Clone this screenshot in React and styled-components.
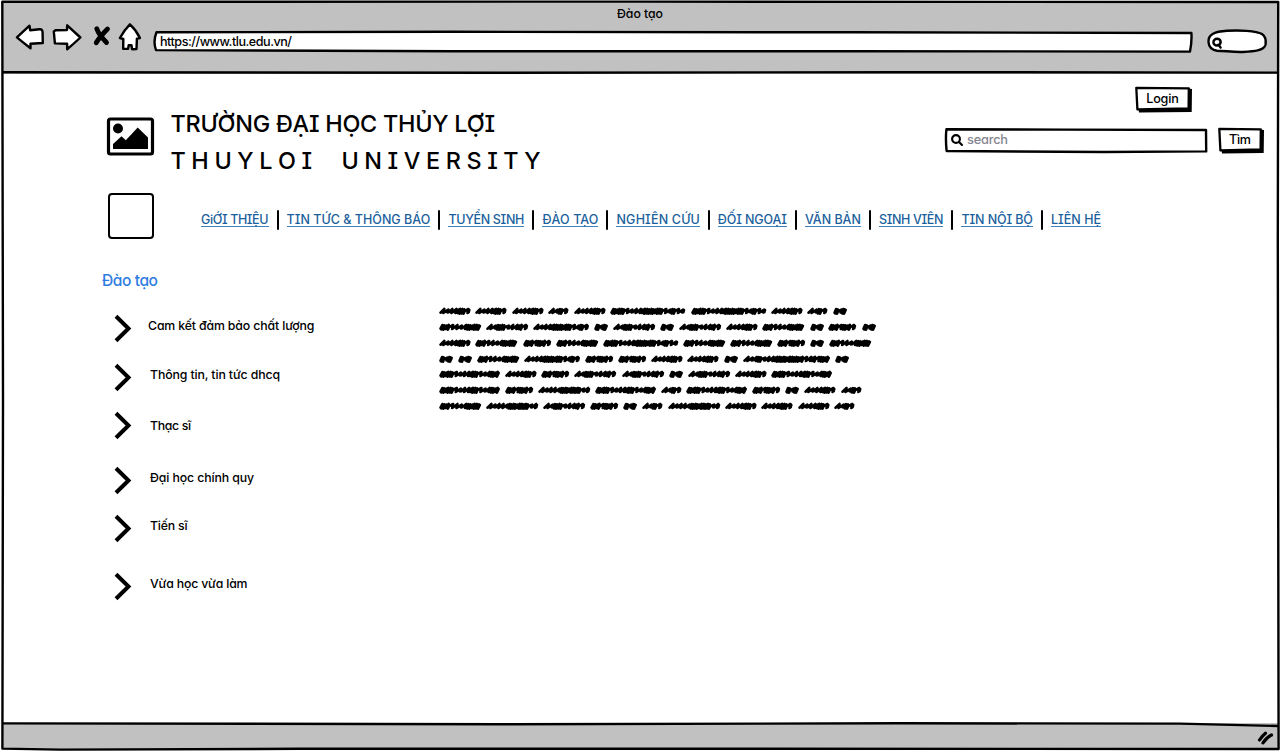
import React, { useLayoutEffect, useRef, useState } from "react";
import styled, { createGlobalStyle } from "styled-components";

const GlobalStyle = createGlobalStyle`
  * { box-sizing: border-box; }
  body {
    margin: 0;
    background: #fff;
    color: #000;
    font-family: Inter, "Open Sans", "Liberation Sans", sans-serif;
    font-feature-settings: "cv08" 1, "cv11" 1;
  }
  svg { display: block; flex: none; overflow: visible; }
`;

const Text = styled.span`
  display: block;
  flex: none;
  width: ${(p) => p.$width}px;
  font-size: ${(p) => p.$size || 12.6}px;
  font-weight: ${(p) => p.$weight || 500};
  line-height: ${(p) => p.$line || 16}px;
  color: ${(p) => p.$color || "#000"};
  white-space: pre;
`;

/* Tracks its text so that it spans the given width. */
function Label({ children, width, ...rest }) {
  const ref = useRef(null);
  const [spacing, setSpacing] = useState(0);
  useLayoutEffect(() => {
    const range = document.createRange();
    range.selectNodeContents(ref.current);
    const natural = range.getBoundingClientRect().width;
    setSpacing((width - natural) / (children.length - 1));
  }, [children, width]);
  return (
    <Text ref={ref} $width={width} style={{ letterSpacing: spacing }} {...rest}>
      {children}
    </Text>
  );
}

const Window = styled.div`
  position: relative;
  display: flex;
  flex-direction: column;
  width: 1280px;
  height: 751px;
  overflow: hidden;
  background: #fff;
`;

const Chrome = styled.header`
  height: 73px;
  margin: 1px 2px 0;
  padding-top: 5px;
  background: #c1c1c1;
`;

const WindowTitle = styled.div`
  display: flex;
  justify-content: center;
`;

const Toolbar = styled.div`
  display: flex;
  align-items: flex-start;
  padding: 1px 0 0 12.5px;
`;

const ToolIcon = styled.svg`
  margin-right: ${(p) => p.$after}px;
  fill: #fff;
  stroke: #000;
  stroke-width: 2.4;
  stroke-linejoin: round;
  stroke-linecap: round;
`;

const Sketch = styled.svg`
  position: absolute;
  inset: 0;
  z-index: ${(p) => p.$layer ?? -1};
  fill: ${(p) => p.$fill || "#fff"};
  stroke: #000;
  stroke-width: ${(p) => p.$stroke || 2.4};
  stroke-linejoin: round;
  pointer-events: none;
`;

const Box = styled.div`
  position: relative;
  isolation: isolate;
  display: flex;
  align-items: center;
  width: ${(p) => p.$width}px;
  height: ${(p) => p.$height}px;
`;

const AddressBar = styled(Box)`
  margin-top: 8px;
  padding: 0 0 1px 7px;
`;

const BrowserSearch = styled(Box)`
  margin: 6px 0 0 14px;
  padding: 3px 0 0 4.5px;
`;

const Page = styled.main`
  flex: 1;
  min-height: 0;
`;

const Header = styled.section`
  display: flex;
  justify-content: space-between;
  height: 119px;
  padding: 0 16px 0 107px;
`;

const Brand = styled.div`
  display: flex;
  gap: 16.5px;
  padding-top: 31px;
`;

const Picture = styled.svg`
  margin-top: 12px;
`;

const Actions = styled.div`
  display: flex;
  flex-direction: column;
  width: 320px;
  padding-top: 12px;
`;

const Button = styled(Box)`
  justify-content: center;
  padding: 0 2px 1px 0;
  margin-left: ${(p) => p.$left || 0}px;
`;

const SearchRow = styled.div`
  display: flex;
  margin-top: 15px;
`;

const SearchField = styled(Box)`
  gap: 4px;
  padding: 0 0 1px 7px;
`;

const NavRow = styled.nav`
  display: flex;
  align-items: center;
  height: 46px;
  padding-left: 108px;
`;

const Square = styled.div`
  width: 46px;
  height: 46px;
  margin-right: 47px;
  border: 2px solid #000;
  border-radius: 4px;
`;

const NavItem = styled.div`
  display: flex;
  align-items: center;
  padding-top: 8px;

  & + &::before {
    content: "";
    width: 2px;
    height: 20px;
    margin: 0 8px 0 8.05px;
    border-radius: 1px;
    background: #000;
  }
`;

const NavLink = styled.a`
  height: 15px;
  margin-top: -1px;
  border-bottom: 1px solid #3f82bb;
`;

const SectionTitle = styled.h1`
  margin: 32px 0 0 102px;
`;

const Columns = styled.div`
  display: flex;
`;

const Topics = styled.ul`
  width: 439px;
  margin: 0;
  padding: 24px 0 0 114px;
  list-style: none;
`;

const Topic = styled.li`
  display: flex;
  align-items: center;
  height: 27px;
  margin-top: ${(p) => p.$before}px;
`;

const TopicText = styled.div`
  padding-left: ${(p) => p.$indent}px;
  padding-bottom: ${(p) => p.$lift}px;
`;

const Copy = styled.div`
  display: flex;
  flex-direction: column;
  gap: 5.85px;
  padding-top: 15px;
`;

const CopyLine = styled.div`
  display: flex;
  gap: 4.9px;
  height: 10px;
`;

const StatusBar = styled.footer`
  display: flex;
  justify-content: flex-end;
  height: 26px;
  margin: 0 2px 2px;
  padding: 7px 3px 0 0;
  background: #c1c1c1;
`;

const links = [
  ["GiỚI THIỆU", 67.5],
  ["TIN TỨC & THÔNG BÁO", 143.8],
  ["TUYỂN SINH", 76],
  ["ĐÀO TẠO", 56],
  ["NGHIÊN CỨU", 83.3],
  ["ĐỐI NGOẠI", 69],
  ["VĂN BẢN", 56],
  ["SINH VIÊN", 64.5],
  ["TIN NỘI BỘ", 71.5],
  ["LIÊN HỆ", 50],
];

const topics = [
  { name: "Cam kết đảm bảo chất lượng", width: 166.5, before: 0, indent: 17, lift: 6 },
  { name: "Thông tin, tin tức dhcq", width: 130, before: 22, indent: 19, lift: 6 },
  { name: "Thạc sĩ", width: 41, before: 21, indent: 19, lift: 0 },
  { name: "Đại học chính quy", width: 104, before: 28, indent: 19, lift: 5 },
  { name: "Tiến sĩ", width: 37.5, before: 21, indent: 19, lift: 6 },
  { name: "Vừa học vừa làm", width: 97.5, before: 31, indent: 19, lift: 6 },
];

/* Each word is [width, strokes]: "d" is a dense scrawl, "l" a loose one. */
const words = {
  A: [14, "dld"],
  B: [20.5, "lldl"],
  C: [31.6, "llllddl"],
  D: [28.2, "ddlddl"],
  E: [42.2, "ddllllddd"],
  F: [42.2, "llddllldl"],
  G: [56, "lllldddddlldl"],
  H: [61, "dddllllddllldd"],
  I: [75.3, "dddlllldddddlldll"],
  J: [52.3, "llllldddddll"],
  K: [87, "llldllldddddddlldldd"],
};

const copy = [
  "CCCBCIICBA",
  "EFGAFAFCEADA",
  "CEDEIEEDAE",
  "AAEGDDCCAKA",
  "HCDFFAFCH",
  "HDJHBHDACB",
  "EJFDABJCCCB",
];

function Word({ kind }) {
  const [width, strokes] = words[kind];
  const step = (width - 3.4) / strokes.length;
  let d = "M1.5 6.7";
  [...strokes].forEach((s, i) => {
    const x = 1.5 + i * step;
    const y = i % 3 === 1 ? 0.6 : 0;
    const at = (f) => (x + step * f).toFixed(1);
    d +=
      s === "d"
        ? `L${at(0.45)} ${3 + y}L${at(0.2)} ${7.5 - y}L${at(0.9)} ${3.4 - y}L${at(0.7)} ${7.7}L${at(1)} 5.2`
        : `L${at(0.95)} ${3 + y}L${at(0.7)} ${7 - y}L${at(1)} 6.2`;
  });
  d += `L${(width - 1.3).toFixed(1)} 4`;
  return (
    <svg width={width} height="10" fill="none" stroke="#000" strokeWidth="2.6" strokeLinejoin="round" strokeLinecap="round">
      <path d={d} />
    </svg>
  );
}

function Magnifier({ size, stroke }) {
  return (
    <svg width={size} height={size} viewBox="0 0 12 12" fill="none" stroke="#000" strokeWidth={stroke} strokeLinecap="round">
      <circle cx="5" cy="5" r="3.9" />
      <path d="M8 8l3 3" />
    </svg>
  );
}

function SketchButton({ label, width, textWidth, left }) {
  const w = width;
  return (
    <Button as="div" role="button" $width={w} $height={26} $left={left}>
      <Sketch width={w} height="26" $stroke={2.3}>
        <path stroke="none" fill="#000" d={`M${w - 4} 2.5L${w} 3L${w - 0.3} 26L4 26.4L3.5 23Z`} />
        <path d={`M1.3 1.8L${w - 3.2} 2.3L${w - 3.4} 22.5L2.4 23.4Z`} />
      </Sketch>
      <Label width={textWidth}>{label}</Label>
    </Button>
  );
}

export default function App() {
  return (
    <Window>
      <GlobalStyle />
      <Chrome>
        <WindowTitle>
          <Label width={46} $size={12.3}>Đào tạo</Label>
        </WindowTitle>
        <Toolbar>
          <ToolIcon width="30" height="28" viewBox="15 23 30 28" $after={7}>
            <path d="M16.9 37.4L29.5 25.7L30.2 30.3L39.5 29.2Q42.5 29 42.6 32.5L42.8 43L30.5 43.8L30.5 48.2Q23 42.5 16.9 37.4Z" />
          </ToolIcon>
          <ToolIcon width="30" height="28" viewBox="52.5 23 30 28" $after={11}>
            <path d="M80.9 37.5L67.7 25.3L67.5 30L56 30.2L54.3 31.5L55.4 43.4L67.6 43.8L67.7 49.2Q74 44 80.9 37.5Z" />
          </ToolIcon>
          <ToolIcon width="18" height="28" viewBox="93.5 23 18 28" $after={8}>
            <path fill="none" strokeWidth="4.8" d="M97.3 28.8C99 34 102.5 38 107 42.5M108 29C104 33 100 37 96.7 42.8" />
          </ToolIcon>
          <ToolIcon width="24" height="28" viewBox="119.3 23 24 28" $after={10.5}>
            <path d="M130.2 24.3Q124.5 30 120.2 38L123.6 39L123.5 48.8L128.4 48.9L129 45.3L131.8 45.3L132.3 49.2L136.8 49L137.2 38.6L140.2 38Q136.5 30 130.2 24.3Z" />
          </ToolIcon>
          <AddressBar $width={1040} $height={22}>
            <Sketch width="1040" height="22">
              <path d="M3.5 1.3L300 .8L700 1.3L1038.4 2Q1039 10.5 1037 20.6L700 20.2L300 20.3L3 19.1Q-.2 10.5 3.5 1.3Z" />
            </Sketch>
            <Label width={132}>https://www.tlu.edu.vn/</Label>
          </AddressBar>
          <BrowserSearch $width={60} $height={25}>
            <Sketch width="60" height="25">
              <path d="M1.5 13C1 5 8 2.6 20 1.8C32 1 49 1.7 55 5Q59.5 8 58.6 15.5C57 22 46 22.4 35 23C26 23.3 17 21.7 10 21.7Q2 20.5 1.5 13Z" />
            </Sketch>
            <svg width="10" height="11" fill="none" stroke="#000" strokeWidth="2.4" strokeLinecap="round">
              <path d="M8.6 4A3.6 3.4 0 1 1 5 .8Q8.5 .8 8.7 4.3Q8 7 5.2 7.3M7 7.3L8.6 9.6" />
            </svg>
          </BrowserSearch>
        </Toolbar>
      </Chrome>

      <Page>
        <Header>
          <Brand>
            <Picture width="47" height="39" viewBox="0 0 47 39">
              <rect x="1.5" y="2" width="44" height="35" rx="2" fill="#fff" stroke="#000" strokeWidth="3.2" />
              <circle cx="11" cy="11.5" r="5" />
              <path d="M6 32V27L14.5 19.2L18.8 23.3L30.7 10.5L41 20.5V32Z" />
            </Picture>
            <div>
              <Label width={324.5} $size={23.4} $line={37} $weight={450}>TRƯỜNG ĐẠI HỌC THỦY LỢI</Label>
              <Label width={370} $size={23.4} $line={38} $weight={450}>T H U Y L O I     U N I V E R S I T Y</Label>
            </div>
          </Brand>
          <Actions>
            <SketchButton label="Login" width={57} textWidth={32.5} left={191} />
            <SearchRow>
              <SearchField $width={263} $height={27}>
                <Sketch width="263" height="27" $stroke={2.4}>
                  <path d="M2.4 2.3L120 2.6L262 3L262.2 24.4L160 25L2.6 24Q1.4 12 2.4 2.3Z" />
                </Sketch>
                <Magnifier size={12} stroke={2.1} />
                <Label width={41} $color="#85858f" $size={12.8}>search</Label>
              </SearchField>
              <SketchButton label="Tìm" width={46} textWidth={22} left={11} />
            </SearchRow>
          </Actions>
        </Header>

        <NavRow>
          <Square />
          {links.map(([name, width]) => (
            <NavItem key={name}>
              <NavLink>
                <Label width={width} $color="#1b5f9c" $size={12.5}>{name}</Label>
              </NavLink>
            </NavItem>
          ))}
        </NavRow>

        <SectionTitle>
          <Label width={56} $size={15.6} $line={20} $color="#2f7de1">Đào tạo</Label>
        </SectionTitle>

        <Columns>
          <Topics>
            {topics.map((t) => (
              <Topic key={t.name} $before={t.before}>
                <svg width="17" height="27" fill="none" stroke="#000" strokeWidth="4">
                  <path d="M2 1.2L14.5 13.5L2 25.8" />
                </svg>
                <TopicText $indent={t.indent} $lift={t.lift}>
                  <Label width={t.width} $size={12.3}>{t.name}</Label>
                </TopicText>
              </Topic>
            ))}
          </Topics>
          <Copy>
            {copy.map((line) => (
              <CopyLine key={line}>
                {[...line].map((kind, i) => (
                  <Word key={i} kind={kind} />
                ))}
              </CopyLine>
            ))}
          </Copy>
        </Columns>
      </Page>

      <StatusBar>
        <svg width="17" height="15" fill="none" stroke="#000" strokeWidth="3.2" strokeLinecap="round">
          <path d="M1.5 10Q4 6 7.5 3.2M5 12.8Q8.5 7.5 13.5 5" />
        </svg>
      </StatusBar>

      <Sketch width="1280" height="751" $fill="none" $layer={1} $stroke={2.4}>
        <path d="M2.3 1.8L640 1.6L1278.2 2L1277.8 240L1278.6 749L700 748.8L300 748.8L60 749.6L2.4 748.6L3 400Z" />
        <path d="M2.5 72.3L500 72.8L900 72.2L1278 72.6M2.5 723.4L500 724.2L900 723.3L1180 723.6L1278 726" />
      </Sketch>
    </Window>
  );
}
